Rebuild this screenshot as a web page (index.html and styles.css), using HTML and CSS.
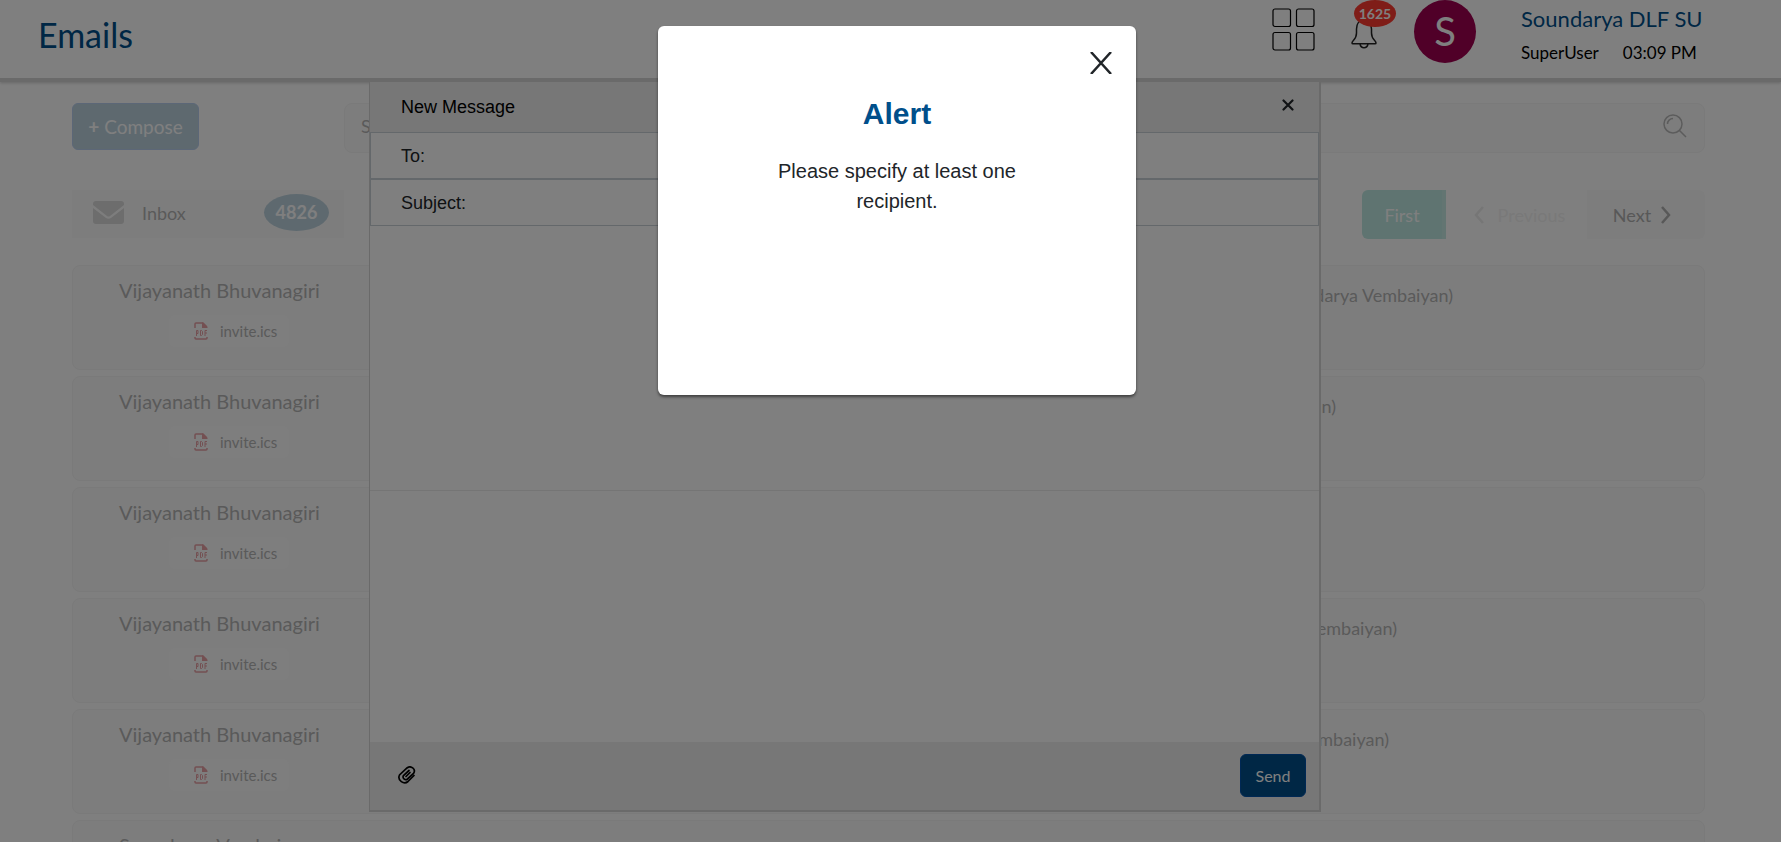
FILE: index.html
```
<!DOCTYPE html>
<html lang="en">
<head>
<meta charset="utf-8">
<title>Emails</title>
<link rel="stylesheet" href="styles.css">
</head>
<body>

<header class="topbar">
  <h1 class="page-title">Emails</h1>
  <div class="topbar-right">
    <button type="button" class="icon-btn apps" aria-label="Apps">
      <svg width="43" height="43" viewBox="0 0 43 43" fill="none" stroke="#000" stroke-width="1.200">
        <rect x="1" y="1" width="17.500" height="17.500" rx="2"/>
        <rect x="24.500" y="1" width="17.500" height="17.500" rx="2"/>
        <rect x="1" y="24.500" width="17.500" height="17.500" rx="2"/>
        <rect x="24.500" y="24.500" width="17.500" height="17.500" rx="2"/>
      </svg>
    </button>
    <button type="button" class="icon-btn bell" aria-label="Notifications">
      <svg width="26" height="32" viewBox="0 0 26 32" fill="none" stroke="#222" stroke-width="1.500">
        <path d="M13 3C8 3 5.500 7 5.500 12v4c0 7-4.500 7-4.500 10q0 .8 1 .8h22q1 0 1-.8c0-3-4.500-3-4.500-10v-4C20.500 7 18 3 13 3z"/>
        <path d="M9 27c1 5 7 5 8 0"/>
      </svg>
      <span class="bell-count">1625</span>
    </button>
    <div class="avatar">S</div>
    <div class="user">
      <a href="#" class="user-name">Soundarya DLF SU</a>
      <div class="user-info"><span>SuperUser</span><span>03:09 PM</span></div>
    </div>
  </div>
</header>

<main class="content">
  <div class="tools">
    <div class="tools-left">
      <button type="button" class="compose-btn"><b>+</b> Compose</button>
    </div>
    <div class="search">
      <input type="text" placeholder="Search" aria-label="Search">
      <svg width="24" height="24" viewBox="0 0 24 24" fill="none" stroke="#777" stroke-width="1.500">
        <circle cx="10" cy="10" r="9"/>
        <path d="M16.500 16.500L23 23M4.500 10A5.500 5.500 0 0 1 10 4.500"/>
      </svg>
    </div>
  </div>

  <div class="tools folders">
    <a href="#" class="inbox">
      <svg width="31" height="23" viewBox="0 0 31 23">
        <path fill="#dadada" d="M3 0h25a3 3 0 0 1 3 3v1L17 15q-1.500 1-3 0L0 4V3a3 3 0 0 1 3-3zM0 7l13 10q2.500 1.500 5 0L31 7v13a3 3 0 0 1-3 3H3a3 3 0 0 1-3-3z"/>
      </svg>
      <span>Inbox</span>
      <span class="inbox-count">4826</span>
    </a>
    <div class="pager">
      <button type="button" class="first">First</button>
      <button type="button" class="prev" disabled>
        <svg width="10" height="18" viewBox="0 0 10 18" fill="none" stroke="#ececec" stroke-width="2.500"><path d="M9 1L2 9l7 8"/></svg>
        Previous
      </button>
      <button type="button" class="next">
        Next
        <svg width="10" height="18" viewBox="0 0 10 18" fill="none" stroke="#b0b0b0" stroke-width="2.500"><path d="M1 1l7 8-7 8"/></svg>
      </button>
    </div>
  </div>

  <svg width="0" height="0" class="defs">
    <symbol id="pdf" viewBox="0 0 14 18">
      <path fill="none" stroke="currentColor" stroke-width="1.500" d="M1 6V2q0-1 1-1h7l4 4M1 15v1q0 1 1 1h10q1 0 1-1v-1"/>
      <path fill="currentColor" d="M8 0l6 6H8z"/>
      <path fill="none" stroke="currentColor" d="M2.500 14V8.500h1.500v3H2.500M6.500 8.500v5h1l1-1v-3l-1-1zM11 14V8.500h2M11 11h2"/>
    </symbol>
  </svg>

  <ul class="mails">
    <li class="mail">
      <div class="sender"><span class="name">Vijayanath Bhuvanagiri</span>
        <a href="#" class="file"><svg width="14" height="18"><use href="#pdf"/></svg>invite.ics</a></div>
      <div class="subject s1">darya Vembaiyan)</div>
    </li>
    <li class="mail">
      <div class="sender"><span class="name">Vijayanath Bhuvanagiri</span>
        <a href="#" class="file"><svg width="14" height="18"><use href="#pdf"/></svg>invite.ics</a></div>
      <div class="subject s2">n)</div>
    </li>
    <li class="mail">
      <div class="sender"><span class="name">Vijayanath Bhuvanagiri</span>
        <a href="#" class="file"><svg width="14" height="18"><use href="#pdf"/></svg>invite.ics</a></div>
    </li>
    <li class="mail">
      <div class="sender"><span class="name">Vijayanath Bhuvanagiri</span>
        <a href="#" class="file"><svg width="14" height="18"><use href="#pdf"/></svg>invite.ics</a></div>
      <div class="subject s3">embaiyan)</div>
    </li>
    <li class="mail">
      <div class="sender"><span class="name">Vijayanath Bhuvanagiri</span>
        <a href="#" class="file"><svg width="14" height="18"><use href="#pdf"/></svg>invite.ics</a></div>
      <div class="subject s4">mbaiyan)</div>
    </li>
    <li class="mail">
      <div class="sender"><span class="name">Soundarya Vembaiyan</span></div>
    </li>
  </ul>
</main>

<form class="message">
  <div class="message-head">
    <span>New Message</span>
    <button type="button" class="icon-btn message-close" aria-label="Close message">
      <svg width="12" height="12" viewBox="0 0 12 12" stroke="#212529" stroke-width="2.200" stroke-linecap="round"><path d="M1.500 1.500l9 9M10.500 1.500l-9 9"/></svg>
    </button>
  </div>
  <div class="field"><label for="to">To:</label><input type="text" id="to"></div>
  <div class="field"><label for="subject">Subject:</label><input type="text" id="subject"></div>
  <textarea class="editor" aria-label="Message"></textarea>
  <div class="attachments"></div>
  <div class="message-foot">
    <button type="button" class="icon-btn" aria-label="Attach file">
      <svg width="18" height="18" viewBox="0 0 18 18" fill="none" stroke="#000" stroke-width="1.700" stroke-linecap="round">
        <path d="M16 9.500l-6 6c-4 3.500-11-1-8.500-6.500L9 2c3.500-3 9.500 1 6.500 5.500L9.500 13c-2.500 2-5.500-1-4-3.500L11 4.500"/>
        <path d="M12 6.500L8 10.500"/>
      </svg>
    </button>
    <button type="submit" class="send">Send</button>
  </div>
</form>

<div class="backdrop"></div>

<div class="alert" role="alertdialog" aria-labelledby="alert-title">
  <button type="button" class="icon-btn alert-close" aria-label="Close">
    <svg width="22" height="22" viewBox="0 0 22 22" stroke="#212529" stroke-width="2.500"><path d="M1 0l20 22M21 0L1 22"/></svg>
  </button>
  <h2 id="alert-title">Alert</h2>
  <p>Please specify at least one recipient.</p>
</div>

</body>
</html>
```
FILE: styles.css
```
* {
  box-sizing: border-box;
}

body {
  margin: 0;
  height: 100vh;
  overflow: hidden;
  background: #fff;
  font-family: Lato, "Open Sans", sans-serif;
  font-size: 18px;
  color: #212529;
}

button, input, textarea {
  font: inherit;
  color: inherit;
  margin: 0;
}

a {
  text-decoration: none;
  color: inherit;
}

.icon-btn {
  background: none;
  border: 0;
  padding: 0;
  line-height: 0;
}

/* top bar */
.topbar {
  display: flex;
  justify-content: space-between;
  height: 82px;
  padding: 0 73px 0 38px;
  border-bottom: 4px solid #d4d4d4;
  box-shadow: 0 1px 3px rgba(0, 0, 0, .2);
}

.page-title {
  margin: 0;
  font-size: 34px;
  font-weight: 400;
  line-height: 70px;
  color: #004f8b;
}

.topbar-right {
  display: flex;
  align-items: flex-start;
}

.apps {
  margin: 8px 36px 0 0;
}

.bell {
  position: relative;
  margin: 17px 37px 0 0;
}

.bell-count {
  position: absolute;
  left: 3px;
  top: -17px;
  width: 42px;
  height: 27px;
  border-radius: 50%;
  background: #ff3b30;
  color: #fff;
  font-size: 14px;
  font-weight: 700;
  line-height: 27px;
  text-align: center;
}

.avatar {
  width: 62px;
  height: 63px;
  margin-right: 45px;
  border-radius: 50%;
  background: #a00050;
  color: #fff;
  font-size: 40px;
  line-height: 63px;
  text-align: center;
}

.user {
  min-width: 187px;
}

.user-name {
  display: block;
  font-size: 22px;
  line-height: 37px;
  color: #004f8b;
}

.user-info {
  display: flex;
  gap: 24px;
  font-size: 17px;
  line-height: 32px;
  color: #000;
}

/* mail list, faded while a message is being written */
.content {
  padding: 21px 76px 0 72px;
}

.tools {
  display: flex;
  height: 87px;
  align-items: flex-start;
}

.tools-left {
  width: 272px;
}

.compose-btn {
  width: 127px;
  height: 47px;
  padding: 0;
  border: 1px solid #b9cfee;
  border-radius: 6px;
  background: #bdd3df;
  color: #fff;
  font-size: 19px;
}

.search {
  flex: 1;
  display: flex;
  align-items: center;
  height: 50px;
  padding: 0 17px 4px 16px;
  border: 1px solid #f4f4f4;
  border-radius: 8px;
  background: #fbfbfb;
}

.search input {
  flex: 1;
  border: 0;
  background: none;
  padding: 0;
}

.search input::placeholder {
  color: #b5b5b5;
}

.search svg {
  opacity: .5;
}

.folders {
  height: 75px;
  justify-content: space-between;
}

.inbox {
  display: flex;
  align-items: center;
  width: 272px;
  height: 48px;
  padding: 0 15px 3px 21px;
  background: #fbfbfb;
  color: #b5b5b5;
  font-size: 18px;
  gap: 18px;
}

.inbox-count {
  width: 65px;
  height: 37px;
  margin-left: auto;
  border-radius: 50%;
  background: #bdd3df;
  color: #fff;
  font-weight: 700;
  line-height: 37px;
  text-align: center;
}

.pager {
  display: flex;
  height: 49px;
}

.pager button {
  display: flex;
  align-items: center;
  justify-content: center;
  border: 0;
  font-size: 18px;
}

.pager .first {
  width: 84px;
  border-right: 4px solid #c6ebe5;
  border-radius: 6px 0 0 6px;
  background: #bfe8e2;
  color: #fff;
}

.pager .prev {
  width: 141px;
  gap: 14px;
  padding: 0 0 0 6px;
  background: none;
  color: #f2f2f2;
}

.pager .next {
  width: 118px;
  gap: 10px;
  padding: 0 8px 0 0;
  border-radius: 0 6px 6px 0;
  background: #fbfbfb;
  color: #b0b0b0;
}

.defs {
  position: absolute;
}

.mails {
  display: flex;
  flex-direction: column;
  gap: 6px;
  margin: 0;
  padding: 0;
  list-style: none;
}

.mail {
  display: flex;
  height: 105px;
  border: 1px solid #f4f4f4;
  border-radius: 8px;
  background: #fbfbfb;
  color: #b5b5b5;
}

.sender {
  display: flex;
  flex-direction: column;
  width: 296px;
  padding: 9px 30px 0 46px;
}

.name {
  font-size: 20px;
  line-height: 30px;
  white-space: nowrap;
}

.file {
  display: flex;
  align-items: center;
  gap: 12px;
  align-self: center;
  width: 120px;
  height: 32px;
  margin-top: 10px;
  padding-left: 25px;
  border-radius: 6px;
  background: #fcfcfc;
  font-size: 15px;
}

.file svg {
  color: #e8a0a4;
}

.subject {
  flex: 1;
  padding: 16px 0 0;
  font-size: 18px;
  line-height: 26px;
  text-align: right;
}

.s1 {
  padding-right: 251px;
}

.s2 {
  padding-right: 368px;
}

.s3 {
  padding-right: 307px;
}

.s4 {
  padding-right: 315px;
}

/* new message window */
.message {
  position: fixed;
  top: 82px;
  left: 369px;
  right: 460px;
  bottom: 30px;
  display: flex;
  flex-direction: column;
  border: solid #d5d5d5;
  border-width: 0 2px 2px 1px;
  background: #fff;
  font-family: "Liberation Sans", Arial, sans-serif;
}

.message-head {
  display: flex;
  justify-content: space-between;
  align-items: center;
  height: 50px;
  padding: 0 25px 0 31px;
  background: #efefef;
  color: #000;
}

.message-close {
  padding-bottom: 5px;
}

.field {
  display: flex;
  align-items: center;
  height: 47px;
  padding: 2px 0 0 30px;
  border: 1px solid #c9d0d6;
}

.field input {
  flex: 1;
  border: 0;
  background: none;
}

.editor {
  height: 265px;
  border: 0;
  border-bottom: 1px solid #ebebeb;
  resize: none;
}

.attachments {
  flex: 1;
}

.message-foot {
  display: flex;
  justify-content: space-between;
  align-items: center;
  height: 68px;
  padding: 0 13px 2px 28px;
  background: #efefef;
}

.send {
  width: 66px;
  height: 43px;
  padding: 0;
  border: 1px solid #0050a8;
  border-radius: 6px;
  background: #004f8b;
  color: #fff;
  font-family: Lato, "Open Sans", sans-serif;
  font-size: 16px;
}

/* alert */
.backdrop {
  position: fixed;
  inset: 0;
  background: rgba(0, 0, 0, .5);
}

.alert {
  position: fixed;
  top: 26px;
  left: 658px;
  width: 478px;
  height: 369px;
  padding: 26px 24px;
  border-radius: 6px;
  background: #fff;
  box-shadow: 0 2px 3px rgba(0, 0, 0, .5);
  font-family: "Liberation Sans", Arial, sans-serif;
  text-align: center;
}

.alert-close {
  display: block;
  margin-left: auto;
}

.alert h2 {
  margin: 22px 0 24px;
  font-size: 30px;
  line-height: 36px;
  color: #004f8b;
}

.alert p {
  width: 300px;
  margin: 0 auto;
  font-size: 20px;
  line-height: 30px;
}
```
